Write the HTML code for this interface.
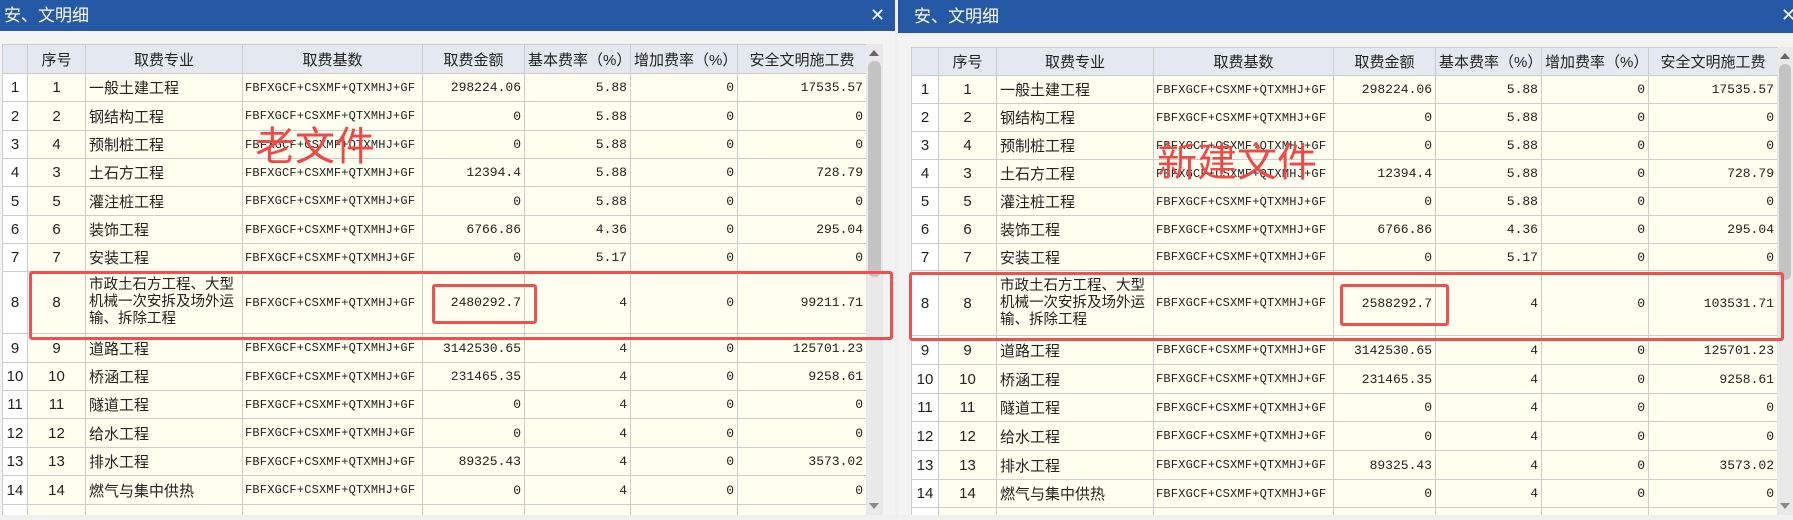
<!DOCTYPE html>
<html><head><meta charset="utf-8"><style>
*{margin:0;padding:0;box-sizing:border-box}
body{width:1793px;height:520px;overflow:hidden;background:#f0f0f0;font-family:"Liberation Sans","Noto Sans CJK SC",sans-serif;position:relative}
.title{position:absolute;top:0;height:31px;background:#2559a6;color:#fff;font-size:17px;line-height:31px;padding-left:4px}
.x{position:absolute;color:#fff;font-size:18px;top:1px;line-height:28px;font-weight:300}
table{position:absolute;border-collapse:collapse;table-layout:fixed;font-size:15px;color:#222}
td{border:1px solid #cdcdcd;background:#fffff0;padding:0 3px;white-space:nowrap;overflow:hidden}
tr.h td{background:#e4e9f1;text-align:center;font-size:15px}
td.n{background:#fff;text-align:center;padding:0}
td.s{text-align:center}
td.f{font-family:"Liberation Mono",monospace;font-size:12px;letter-spacing:0.2px;padding:0 2px}
td.r{text-align:right;font-family:"Liberation Mono",monospace;font-size:13px;letter-spacing:0px}
td.m{white-space:normal;line-height:17px;font-size:14.5px}
.sb{position:absolute;background:#e9e9e9}
.th{position:absolute;background:#c3c3c3;border-radius:6px}
.red{position:absolute;border:3px solid #f05050;border-radius:3px}
.ann{position:absolute;color:#f04848;font-size:40px;line-height:40px}
</style></head><body>
<div class="title" style="left:0;width:895px">安、文明细</div>
<div class="x" style="left:870px">✕</div>
<div class="title" style="left:898px;width:895px;height:33px;line-height:33px;padding-left:16px">安、文明细</div>
<div class="x" style="left:1781px">✕</div>
<div style="position:absolute;left:0;top:31px;width:895px;height:489px;background:#f3f3f3"></div>
<div style="position:absolute;left:898px;top:33px;width:895px;height:487px;background:#f3f3f3"></div>

<table style="left:2px;top:44px;width:864px">
<colgroup><col style="width:25px"><col style="width:58px"><col style="width:157px"><col style="width:180px"><col style="width:102px"><col style="width:106px"><col style="width:107px"><col style="width:129px"></colgroup>
<tr class="h" style="height:29px"><td class="n" style="background:#e4e9f1"></td><td>序号</td><td>取费专业</td><td>取费基数</td><td>取费金额</td><td>基本费率（%）</td><td>增加费率（%）</td><td>安全文明施工费</td></tr>
<tr style="height:28px"><td class="n">1</td><td class="s">1</td><td>一般土建工程</td><td class="f">FBFXGCF+CSXMF+QTXMHJ+GF</td><td class="r">298224.06</td><td class="r">5.88</td><td class="r">0</td><td class="r">17535.57</td></tr>
<tr style="height:29px"><td class="n">2</td><td class="s">2</td><td>钢结构工程</td><td class="f">FBFXGCF+CSXMF+QTXMHJ+GF</td><td class="r">0</td><td class="r">5.88</td><td class="r">0</td><td class="r">0</td></tr>
<tr style="height:28px"><td class="n">3</td><td class="s">4</td><td>预制桩工程</td><td class="f">FBFXGCF+CSXMF+QTXMHJ+GF</td><td class="r">0</td><td class="r">5.88</td><td class="r">0</td><td class="r">0</td></tr>
<tr style="height:28px"><td class="n">4</td><td class="s">3</td><td>土石方工程</td><td class="f">FBFXGCF+CSXMF+QTXMHJ+GF</td><td class="r">12394.4</td><td class="r">5.88</td><td class="r">0</td><td class="r">728.79</td></tr>
<tr style="height:29px"><td class="n">5</td><td class="s">5</td><td>灌注桩工程</td><td class="f">FBFXGCF+CSXMF+QTXMHJ+GF</td><td class="r">0</td><td class="r">5.88</td><td class="r">0</td><td class="r">0</td></tr>
<tr style="height:28px"><td class="n">6</td><td class="s">6</td><td>装饰工程</td><td class="f">FBFXGCF+CSXMF+QTXMHJ+GF</td><td class="r">6766.86</td><td class="r">4.36</td><td class="r">0</td><td class="r">295.04</td></tr>
<tr style="height:28px"><td class="n">7</td><td class="s">7</td><td>安装工程</td><td class="f">FBFXGCF+CSXMF+QTXMHJ+GF</td><td class="r">0</td><td class="r">5.17</td><td class="r">0</td><td class="r">0</td></tr>
<tr style="height:62px"><td class="n">8</td><td class="s">8</td><td class="m">市政土石方工程、大型机械一次安拆及场外运输、拆除工程</td><td class="f">FBFXGCF+CSXMF+QTXMHJ+GF</td><td class="r">2480292.7</td><td class="r">4</td><td class="r">0</td><td class="r">99211.71</td></tr>
<tr style="height:29px"><td class="n">9</td><td class="s">9</td><td>道路工程</td><td class="f">FBFXGCF+CSXMF+QTXMHJ+GF</td><td class="r">3142530.65</td><td class="r">4</td><td class="r">0</td><td class="r">125701.23</td></tr>
<tr style="height:28px"><td class="n">10</td><td class="s">10</td><td>桥涵工程</td><td class="f">FBFXGCF+CSXMF+QTXMHJ+GF</td><td class="r">231465.35</td><td class="r">4</td><td class="r">0</td><td class="r">9258.61</td></tr>
<tr style="height:28px"><td class="n">11</td><td class="s">11</td><td>隧道工程</td><td class="f">FBFXGCF+CSXMF+QTXMHJ+GF</td><td class="r">0</td><td class="r">4</td><td class="r">0</td><td class="r">0</td></tr>
<tr style="height:29px"><td class="n">12</td><td class="s">12</td><td>给水工程</td><td class="f">FBFXGCF+CSXMF+QTXMHJ+GF</td><td class="r">0</td><td class="r">4</td><td class="r">0</td><td class="r">0</td></tr>
<tr style="height:28px"><td class="n">13</td><td class="s">13</td><td>排水工程</td><td class="f">FBFXGCF+CSXMF+QTXMHJ+GF</td><td class="r">89325.43</td><td class="r">4</td><td class="r">0</td><td class="r">3573.02</td></tr>
<tr style="height:29px"><td class="n">14</td><td class="s">14</td><td>燃气与集中供热</td><td class="f">FBFXGCF+CSXMF+QTXMHJ+GF</td><td class="r">0</td><td class="r">4</td><td class="r">0</td><td class="r">0</td></tr>
<tr style="height:12px"><td class="n"></td><td></td><td></td><td></td><td></td><td></td><td></td><td></td></tr>
</table>
<div style="position:absolute;left:0;top:515px;width:895px;height:5px;background:#f0f0f0"></div>
<div class="sb" style="left:866px;top:44px;width:17px;height:471px"></div>
<div class="th" style="left:868px;top:61px;width:13px;height:216px"></div>
<div style="position:absolute;left:869px;top:50px;width:0;height:0;border-left:5px solid transparent;border-right:5px solid transparent;border-bottom:6px solid #666"></div>
<div style="position:absolute;left:869px;top:503px;width:0;height:0;border-left:5px solid transparent;border-right:5px solid transparent;border-top:6px solid #888"></div>

<table style="left:911px;top:47px;width:866px">
<colgroup><col style="width:27px"><col style="width:58px"><col style="width:157px"><col style="width:180px"><col style="width:102px"><col style="width:106px"><col style="width:107px"><col style="width:129px"></colgroup>
<tr class="h" style="height:28px"><td class="n" style="background:#e4e9f1"></td><td>序号</td><td>取费专业</td><td>取费基数</td><td>取费金额</td><td>基本费率（%）</td><td>增加费率（%）</td><td>安全文明施工费</td></tr>
<tr style="height:28px"><td class="n">1</td><td class="s">1</td><td>一般土建工程</td><td class="f">FBFXGCF+CSXMF+QTXMHJ+GF</td><td class="r">298224.06</td><td class="r">5.88</td><td class="r">0</td><td class="r">17535.57</td></tr>
<tr style="height:28px"><td class="n">2</td><td class="s">2</td><td>钢结构工程</td><td class="f">FBFXGCF+CSXMF+QTXMHJ+GF</td><td class="r">0</td><td class="r">5.88</td><td class="r">0</td><td class="r">0</td></tr>
<tr style="height:28px"><td class="n">3</td><td class="s">4</td><td>预制桩工程</td><td class="f">FBFXGCF+CSXMF+QTXMHJ+GF</td><td class="r">0</td><td class="r">5.88</td><td class="r">0</td><td class="r">0</td></tr>
<tr style="height:28px"><td class="n">4</td><td class="s">3</td><td>土石方工程</td><td class="f">FBFXGCF+CSXMF+QTXMHJ+GF</td><td class="r">12394.4</td><td class="r">5.88</td><td class="r">0</td><td class="r">728.79</td></tr>
<tr style="height:28px"><td class="n">5</td><td class="s">5</td><td>灌注桩工程</td><td class="f">FBFXGCF+CSXMF+QTXMHJ+GF</td><td class="r">0</td><td class="r">5.88</td><td class="r">0</td><td class="r">0</td></tr>
<tr style="height:28px"><td class="n">6</td><td class="s">6</td><td>装饰工程</td><td class="f">FBFXGCF+CSXMF+QTXMHJ+GF</td><td class="r">6766.86</td><td class="r">4.36</td><td class="r">0</td><td class="r">295.04</td></tr>
<tr style="height:27px"><td class="n">7</td><td class="s">7</td><td>安装工程</td><td class="f">FBFXGCF+CSXMF+QTXMHJ+GF</td><td class="r">0</td><td class="r">5.17</td><td class="r">0</td><td class="r">0</td></tr>
<tr style="height:65px"><td class="n">8</td><td class="s">8</td><td class="m">市政土石方工程、大型机械一次安拆及场外运输、拆除工程</td><td class="f">FBFXGCF+CSXMF+QTXMHJ+GF</td><td class="r">2588292.7</td><td class="r">4</td><td class="r">0</td><td class="r">103531.71</td></tr>
<tr style="height:29px"><td class="n">9</td><td class="s">9</td><td>道路工程</td><td class="f">FBFXGCF+CSXMF+QTXMHJ+GF</td><td class="r">3142530.65</td><td class="r">4</td><td class="r">0</td><td class="r">125701.23</td></tr>
<tr style="height:29px"><td class="n">10</td><td class="s">10</td><td>桥涵工程</td><td class="f">FBFXGCF+CSXMF+QTXMHJ+GF</td><td class="r">231465.35</td><td class="r">4</td><td class="r">0</td><td class="r">9258.61</td></tr>
<tr style="height:28px"><td class="n">11</td><td class="s">11</td><td>隧道工程</td><td class="f">FBFXGCF+CSXMF+QTXMHJ+GF</td><td class="r">0</td><td class="r">4</td><td class="r">0</td><td class="r">0</td></tr>
<tr style="height:29px"><td class="n">12</td><td class="s">12</td><td>给水工程</td><td class="f">FBFXGCF+CSXMF+QTXMHJ+GF</td><td class="r">0</td><td class="r">4</td><td class="r">0</td><td class="r">0</td></tr>
<tr style="height:29px"><td class="n">13</td><td class="s">13</td><td>排水工程</td><td class="f">FBFXGCF+CSXMF+QTXMHJ+GF</td><td class="r">89325.43</td><td class="r">4</td><td class="r">0</td><td class="r">3573.02</td></tr>
<tr style="height:28px"><td class="n">14</td><td class="s">14</td><td>燃气与集中供热</td><td class="f">FBFXGCF+CSXMF+QTXMHJ+GF</td><td class="r">0</td><td class="r">4</td><td class="r">0</td><td class="r">0</td></tr>
<tr style="height:12px"><td class="n"></td><td></td><td></td><td></td><td></td><td></td><td></td><td></td></tr>
</table>
<div style="position:absolute;left:898px;top:515px;width:895px;height:5px;background:#f0f0f0"></div>
<div class="sb" style="left:1777px;top:47px;width:16px;height:468px"></div>
<div class="th" style="left:1779px;top:64px;width:12px;height:216px"></div>
<div style="position:absolute;left:1780px;top:53px;width:0;height:0;border-left:5px solid transparent;border-right:5px solid transparent;border-bottom:6px solid #666"></div>
<div style="position:absolute;left:1780px;top:503px;width:0;height:0;border-left:5px solid transparent;border-right:5px solid transparent;border-top:6px solid #888"></div>

<div class="red" style="left:29px;top:271px;width:864px;height:69px"></div>
<div class="red" style="left:432px;top:284px;width:105px;height:40px"></div>
<div class="red" style="left:909px;top:272px;width:875px;height:69px"></div>
<div class="red" style="left:1340px;top:284px;width:109px;height:42px"></div>
<div class="ann" style="left:255px;top:127px">老文件</div>
<div class="ann" style="left:1157px;top:143px">新建文件</div>
</body></html>
